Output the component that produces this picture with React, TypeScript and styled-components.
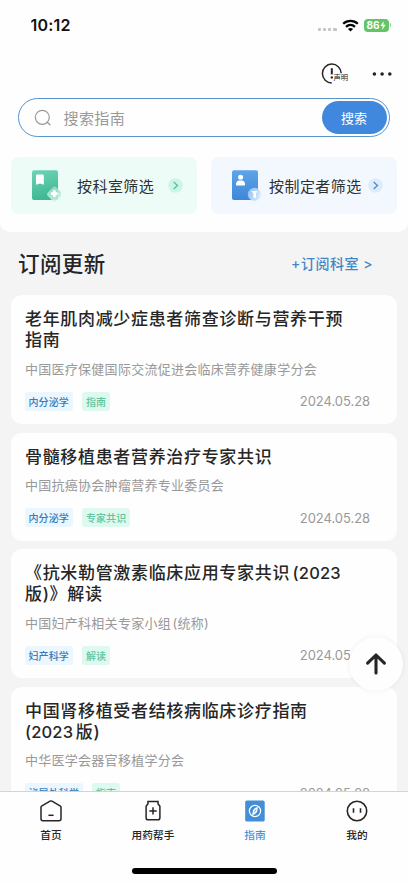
import React from "react";
import styled, { createGlobalStyle } from "styled-components";

const Global = createGlobalStyle`
  * { box-sizing: border-box; }
  body { margin: 0; background: #fefefe; }
  button { font: inherit; border: 0; padding: 0; background: none; letter-spacing: inherit; }
`;

const Screen = styled.div`
  position: relative;
  width: 408px;
  height: 883px;
  display: flex;
  flex-direction: column;
  overflow: hidden;
  background: #f4f4f4;
  color: #262626;
  font-family: Inter, "Noto Sans CJK SC", sans-serif;
`;

const Header = styled.header`
  flex: none;
  height: 232px;
  background: #fefefe;
  border-radius: 0 0 10px 10px;
`;

const StatusBar = styled.div`
  height: 50px;
  padding: 0 17px 0 30.5px;
  display: flex;
  align-items: center;
  justify-content: space-between;
`;

const Clock = styled.span`
  font-size: 16px;
  font-weight: 600;
  color: #111;
  letter-spacing: 0.2px;
`;

const StatusIcons = styled.div`
  display: flex;
  align-items: center;
`;

const Signal = styled.div`
  display: flex;
  gap: 2px;
  margin: 8px 5px 0 0;
  i { width: 3.2px; height: 3px; border-radius: 1px; background: #c4c4c4; }
`;

const Battery = styled.div`
  display: flex;
  align-items: center;
  justify-content: center;
  width: 25px;
  height: 13px;
  margin-left: 5px;
  border-radius: 4px;
  background: #65c466;
  color: #fff;
  font-size: 10px;
  font-weight: 700;
`;

const BatteryTip = styled.i`
  width: 1.5px;
  height: 4px;
  margin-left: 1px;
  border-radius: 0 1px 1px 0;
  background: #8fd08f;
`;

const Actions = styled.div`
  height: 48px;
  padding: 0 16.5px 0 0;
  display: flex;
  align-items: center;
  justify-content: flex-end;
  gap: 21px;
`;

const Notice = styled.div`
  position: relative;
  width: 30px;
  height: 24px;
  svg { display: block; }
`;

const NoticeText = styled.span`
  position: absolute;
  left: 13px;
  top: 11px;
  font-size: 7.3px;
  line-height: 10px;
  white-space: nowrap;
`;

const SearchBox = styled.div`
  height: 39px;
  margin: 0 18px;
  padding: 0 2.5px 0 15px;
  display: flex;
  align-items: center;
  border: 1.4px solid #5795cc;
  border-radius: 20px;
`;

const Placeholder = styled.span`
  flex: 1;
  margin-left: 11.5px;
  font-size: 15px;
  letter-spacing: 0.4px;
  color: #999;
`;

const SearchButton = styled.button`
  width: 65px;
  height: 33px;
  border-radius: 17px;
  background: #3f88dd;
  color: #fff;
  font-size: 13px;
`;

const Filters = styled.div`
  display: flex;
  gap: 14px;
  padding: 20px 11px 0;
`;

const Filter = styled.div<{ $blue?: boolean }>`
  flex: 1;
  height: 57px;
  display: flex;
  align-items: center;
  padding: 0 14px 0 19px;
  border-radius: 7px;
  background: ${(p) => (p.$blue ? "#f3f8fe" : "#eefcf8")};
`;

const FilterLabel = styled.span<{ $blue?: boolean }>`
  flex: 1;
  margin-left: ${(p) => (p.$blue ? 8 : 16)}px;
  font-size: 15px;
  letter-spacing: 0.45px;
  color: #303030;
  white-space: nowrap;
`;

const Feed = styled.main`
  flex: 1;
  min-height: 0;
  overflow: hidden;
  padding: 0 11px;
`;

const SectionHead = styled.div`
  height: 63px;
  display: flex;
  align-items: center;
  justify-content: space-between;
  padding: 0 24px 2px 7px;
`;

const SectionTitle = styled.h2`
  margin: 0;
  font-size: 21.5px;
  font-weight: 500;
  letter-spacing: 0.4px;
`;

const Subscribe = styled.span`
  font-size: 14px;
  font-weight: 500;
  letter-spacing: 0.5px;
  color: #4388c5;
`;

const Card = styled.article`
  margin-bottom: 8.5px;
  padding: 14.2px 27px 13.5px 14px;
  border-radius: 11px;
  background: #fefefe;
`;

const Title = styled.h3`
  margin: 0;
  font-size: 17px;
  line-height: 21px;
  font-weight: 500;
  letter-spacing: 0.67px;
  white-space: pre-line;
`;

const Year = styled.span`
  font-size: 16.5px;
  line-height: 1;
  letter-spacing: 0.15px;
  word-spacing: -2px;
`;

const Author = styled.p`
  margin: 8.4px 0 14px;
  font-size: 13px;
  line-height: 18px;
  letter-spacing: 0.27px;
  word-spacing: -2.5px;
  color: #999;
  white-space: nowrap;
`;

const Meta = styled.div`
  display: flex;
  align-items: center;
  height: 19px;
  margin-left: -0.5px;
`;

const Tag = styled.span<{ $kind: "dept" | "type" }>`
  height: 19px;
  line-height: 20px;
  margin-right: 9px;
  padding: 0 4px;
  border-radius: 3px;
  font-size: 10px;
  font-weight: 500;
  letter-spacing: 0.1px;
  color: ${(p) => (p.$kind === "dept" ? "#397ab8" : "#61c4a0")};
  background: ${(p) => (p.$kind === "dept" ? "#ebf6fe" : "#def9ef")};
`;

const DateText = styled.time`
  margin-left: auto;
  font-size: 13px;
  letter-spacing: -0.05px;
  color: #999;
`;

const TopButton = styled.button`
  position: absolute;
  left: 349px;
  top: 637px;
  width: 54px;
  height: 54px;
  display: flex;
  align-items: center;
  justify-content: center;
  border-radius: 50%;
  background: #fefefe;
  box-shadow: 0 0 4px rgba(0, 0, 0, 0.07);
`;

const TabBar = styled.nav`
  flex: none;
  height: 92px;
  border-top: 1px solid #d4d4d4;
  background: #fefefe;
`;

const Tabs = styled.div`
  display: flex;
  height: 76px;
`;

const Tab = styled.div<{ $active?: boolean }>`
  flex: 1;
  display: flex;
  flex-direction: column;
  align-items: center;
  padding-top: 7px;
  gap: 5px;
  font-size: 10.7px;
  line-height: 16px;
  font-weight: 500;
  color: ${(p) => (p.$active ? "#4795dc" : "#262626")};
`;

const HomeIndicator = styled.div`
  width: 145px;
  height: 5.5px;
  margin: 0 auto;
  border-radius: 3px;
  background: #000;
`;

const Wifi = () => (
  <svg width="17" height="13" viewBox="0 0 17 13" fill="none" stroke="#050505" strokeWidth="2.3">
    <path d="M1.2 4.8C5.3.8 11.7.8 15.8 4.8" />
    <path d="M4 7.8C6.6 5.4 10.4 5.4 13 7.8" />
    <path d="M8.5 12.4L5.9 9.9C7.4 8.6 9.6 8.6 11.1 9.9Z" fill="#050505" stroke="none" />
  </svg>
);

const Bolt = () => (
  <svg width="6" height="9" viewBox="0 0 6 9">
    <path d="M3.8 0L.3 5H2.7L2.1 9L5.7 3.8H3.3Z" fill="#fff" />
  </svg>
);

const NoticeIcon = () => (
  <svg width="24" height="24" viewBox="0 0 24 24" fill="none" stroke="#262626">
    <path d="M20.2 11.2A9.4 9.4 0 1 0 10.8 20.9" strokeWidth="1.5" />
    <path d="M10.8 6.2V12.4" strokeWidth="2" />
    <circle cx="10.8" cy="15.4" r="1.2" fill="#262626" stroke="none" />
  </svg>
);

const MoreIcon = () => (
  <svg width="20" height="6" viewBox="0 0 20 6" fill="#222">
    <circle cx="2.4" cy="3" r="1.8" />
    <circle cx="10.1" cy="3" r="1.8" />
    <circle cx="17.8" cy="3" r="1.8" />
  </svg>
);

const SearchIcon = () => (
  <svg width="18" height="18" viewBox="0 0 18 18" fill="none" stroke="#999" strokeWidth="1.2">
    <circle cx="8.3" cy="8.3" r="7" />
    <path d="M13.2 13.2L16 15.8" strokeLinecap="round" />
  </svg>
);

const DeptIcon = () => (
  <svg width="31" height="34" viewBox="0 0 31 34">
    <defs>
      <linearGradient id="dept" x1="0" y1="0" x2="0.2" y2="1">
        <stop offset="0" stopColor="#6fd3b7" />
        <stop offset="1" stopColor="#3fb893" />
      </linearGradient>
      <linearGradient id="diamond" x1="0" y1="0" x2="1" y2="1">
        <stop offset="0" stopColor="#9adfca" />
        <stop offset="1" stopColor="#d6f5ec" />
      </linearGradient>
    </defs>
    <rect x="2" y="1.3" width="26" height="29.6" rx="2" fill="url(#dept)" />
    <path d="M7 5.5H12.8Q13.8 5.5 13.8 6.5V15.8L10 14.6L6 15.8V6.5Q6 5.5 7 5.5Z" fill="#fff" />
    <rect x="18.6" y="19.2" width="12" height="12" rx="2.5" transform="rotate(45 24.6 25.2)" fill="url(#diamond)" opacity="0.85" />
    <path d="M24.3 21.2V28M21 24.6H27.6" stroke="#fff" strokeWidth="2.8" />
  </svg>
);

const MakerIcon = () => (
  <svg width="31" height="34" viewBox="0 0 31 34">
    <defs>
      <linearGradient id="maker" x1="0" y1="0" x2="0" y2="1">
        <stop offset="0" stopColor="#5da4e8" />
        <stop offset="1" stopColor="#3f86d8" />
      </linearGradient>
      <linearGradient id="coin" x1="0" y1="0" x2="1" y2="0.6">
        <stop offset="0" stopColor="#8fc0f0" />
        <stop offset="1" stopColor="#d9ecfd" />
      </linearGradient>
    </defs>
    <rect x="2" y="1.3" width="26" height="29.6" rx="2" fill="url(#maker)" />
    <circle cx="10.6" cy="8.3" r="2.5" fill="#fff" />
    <path d="M6.1 16.4V14.6Q6.4 11.7 9.2 11.4H11.9Q14.7 11.7 15 14.6V16.4Z" fill="#fff" />
    <circle cx="24.4" cy="25.3" r="6.6" fill="url(#coin)" opacity="0.95" />
    <path d="M21.2 22H27.6L26 24.5V28.8H23.4V24.5Z" fill="#fff" />
  </svg>
);

const Chevron = ({ blue }: { blue?: boolean }) => (
  <svg width="15" height="15" viewBox="0 0 15 15" fill="none">
    <circle cx="7.5" cy="7.5" r="7.3" fill={blue ? "#ddecfb" : "#ccf4e8"} />
    <path d="M5.7 4.1L9.5 7.5L5.7 10.9" stroke={blue ? "#5089c2" : "#5fbd9f"} strokeWidth="1.3" />
  </svg>
);

const ArrowUp = () => (
  <svg width="24" height="24" viewBox="0 0 24 24" fill="none" stroke="#262626" strokeWidth="3.1" strokeLinecap="round" strokeLinejoin="round">
    <path d="M12 21V3M3.6 11.2L12 3L20.4 11.2" />
  </svg>
);

const HomeIcon = () => (
  <svg width="24" height="24" viewBox="0 0 24 24" fill="none" stroke="#262626" strokeWidth="1.5" strokeLinejoin="round">
    <path d="M2 8.3Q2 7.6 2.6 7.2L11 2.2Q12 1.6 13 2.2L21.4 7.2Q22 7.6 22 8.3V19.8Q22 21.8 20 21.8H4Q2 21.8 2 19.8Z" />
    <path d="M9.4 16.3H14.6" />
  </svg>
);

const MedicineIcon = () => (
  <svg width="24" height="24" viewBox="0 0 24 24" fill="none" stroke="#262626" strokeWidth="1.5" strokeLinejoin="round">
    <path d="M6.2 2.5H17.8M7 2.5V4.7L5.1 7.2V18.7Q5.1 20.8 7.2 20.8H16.8Q18.9 20.8 18.9 18.7V7.2L17 4.7V2.5" />
    <path d="M12 8.2V15.6M8.3 11.9H15.7" />
  </svg>
);

const GuideIcon = () => (
  <svg width="24" height="24" viewBox="0 0 24 24" fill="none">
    <rect x="2.2" y="1.4" width="19.5" height="21.2" rx="1.7" fill="#438ed6" />
    <circle cx="12" cy="12" r="5.6" stroke="#fff" strokeWidth="1.2" />
    <path d="M14.6 7.7Q15.2 12.8 12.4 14.7L9.4 16.3Q8.8 11.2 11.6 9.3Z" fill="#fff" />
    <path d="M13 10.5L11.1 13.5" stroke="#438ed6" strokeWidth="0.8" />
  </svg>
);

const MineIcon = () => (
  <svg width="24" height="24" viewBox="0 0 24 24" fill="none" stroke="#262626" strokeWidth="1.6">
    <circle cx="12" cy="12" r="9.7" />
    <path d="M8.5 9.2V13.8M15.5 9.2V13.8" />
  </svg>
);

const guides = [
  { id: 1, title: "老年肌肉减少症患者筛查诊断与营养干预\n指南", author: "中国医疗保健国际交流促进会临床营养健康学分会", dept: "内分泌学", type: "指南", date: "2024.05.28" },
  { id: 2, title: "骨髓移植患者营养治疗专家共识", author: "中国抗癌协会肿瘤营养专业委员会", dept: "内分泌学", type: "专家共识", date: "2024.05.28" },
  { id: 3, title: <>《抗米勒管激素临床应用专家共识<Year> (2023</Year>{"\n"}版)》解读</>, author: "中国妇产科相关专家小组 (统称)", dept: "妇产科学", type: "解读", date: "2024.05.28" },
  { id: 4, title: <>中国肾移植受者结核病临床诊疗指南{"\n"}<Year>(2023 </Year>版)</>, author: "中华医学会器官移植学分会", dept: "泌尿外科学", type: "指南", date: "2024.05.28" },
];

const tabs = [
  { label: "首页", Icon: HomeIcon },
  { label: "用药帮手", Icon: MedicineIcon },
  { label: "指南", Icon: GuideIcon, active: true },
  { label: "我的", Icon: MineIcon },
];

export default function App() {
  return (
    <>
      <Global />
      <Screen>
        <Header>
          <StatusBar>
            <Clock>10:12</Clock>
            <StatusIcons>
              <Signal><i /><i /><i /><i /></Signal>
              <Wifi />
              <Battery>86<Bolt /></Battery>
              <BatteryTip />
            </StatusIcons>
          </StatusBar>
          <Actions>
            <Notice>
              <NoticeIcon />
              <NoticeText>声明</NoticeText>
            </Notice>
            <MoreIcon />
          </Actions>
          <SearchBox>
            <SearchIcon />
            <Placeholder>搜索指南</Placeholder>
            <SearchButton>搜索</SearchButton>
          </SearchBox>
          <Filters>
            <Filter>
              <DeptIcon />
              <FilterLabel>按科室筛选</FilterLabel>
              <Chevron />
            </Filter>
            <Filter $blue>
              <MakerIcon />
              <FilterLabel $blue>按制定者筛选</FilterLabel>
              <Chevron blue />
            </Filter>
          </Filters>
        </Header>
        <Feed>
          <SectionHead>
            <SectionTitle>订阅更新</SectionTitle>
            <Subscribe>+订阅科室 &gt;</Subscribe>
          </SectionHead>
          {guides.map((g) => (
            <Card key={g.id}>
              <Title>{g.title}</Title>
              <Author>{g.author}</Author>
              <Meta>
                <Tag $kind="dept">{g.dept}</Tag>
                <Tag $kind="type">{g.type}</Tag>
                <DateText>{g.date}</DateText>
              </Meta>
            </Card>
          ))}
        </Feed>
        <TabBar>
          <Tabs>
            {tabs.map(({ label, Icon, active }) => (
              <Tab key={label} $active={active}>
                <Icon />
                {label}
              </Tab>
            ))}
          </Tabs>
          <HomeIndicator />
        </TabBar>
        <TopButton aria-label="返回顶部">
          <ArrowUp />
        </TopButton>
      </Screen>
    </>
  );
}
